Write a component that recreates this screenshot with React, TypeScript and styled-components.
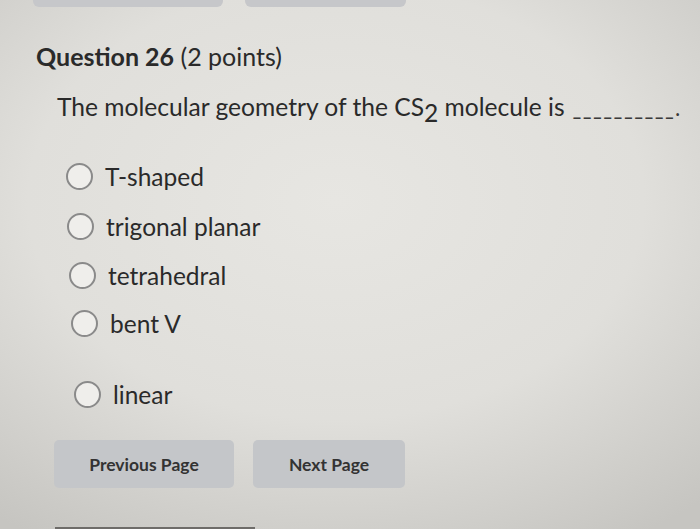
import React from "react";
import styled, { createGlobalStyle } from "styled-components";

const Global = createGlobalStyle`
  html, body { margin: 0; padding: 0; }
  body {
    width: 700px;
    height: 529px;
    overflow: hidden;
    font-family: Lato, "Open Sans", sans-serif;
    background: #d9d8d4;
  }
`;

const Screen = styled.div`
  width: 700px;
  height: 529px;
  overflow: hidden;
  display: flex;
  flex-direction: column;
  color: #2a2a2a;
  background: radial-gradient(ellipse 80% 75% at 48% 38%, #e7e6e2 0%, #e0dfdb 55%, #c6c5c1 100%);
`;

const TopBar = styled.div`
  display: flex;
  gap: 22px;
  padding-left: 33px;
  height: 7px;
`;

const CutButton = styled.div<{ $w: number }>`
  width: ${(p) => p.$w}px;
  height: 7px;
  background: #c6c7ca;
  border-radius: 0 0 6px 6px;
`;

const Heading = styled.h2`
  margin: 34px 0 0 36px;
  font-size: 25px;
  line-height: 30px;
  font-weight: 400;
`;

const Strong = styled.span`
  font-weight: 700;
`;

const Prompt = styled.p`
  margin: 21px 0 0 57px;
  font-size: 24.6px;
  line-height: 30px;
  white-space: nowrap;
`;

const Sub = styled.sub`
  font-size: 24.6px;
  line-height: 0;
  vertical-align: -6px;
`;

const Blank = styled.span`
  margin-left: 8px;
  letter-spacing: 1.9px;
  font-size: 18px;
  font-weight: 700;
  color: #3a3a3a;
`;

const Options = styled.ul`
  list-style: none;
  margin: 38px 0 0 0;
  padding: 0;
  display: flex;
  flex-direction: column;
`;

const Option = styled.li<{ $shift: number; $gap: number }>`
  display: flex;
  align-items: center;
  gap: 12px;
  height: 28px;
  margin-top: ${(p) => p.$gap}px;
  padding-left: ${(p) => 66 + p.$shift}px;
  font-size: 24.5px;
`;

const Radio = styled.span`
  width: 23px;
  height: 23px;
  border-radius: 50%;
  border: 2px solid #8a8a8a;
  background: #efeeeb;
  flex: none;
`;

const ButtonRow = styled.div`
  display: flex;
  gap: 19px;
  margin: 32px 0 0 54px;
`;

const NavButton = styled.button<{ $w: number }>`
  width: ${(p) => p.$w}px;
  height: 48px;
  border: none;
  border-radius: 5px;
  background: #c4c6c9;
  color: #333;
  font-family: Lato, "Open Sans", sans-serif;
  font-weight: 700;
  font-size: 17.5px;
  padding: 0;
`;

const BottomEdge = styled.div`
  margin: auto 0 0 55px;
  width: 200px;
  height: 2px;
  background: #6e6c69;
`;

const options = [
  { label: "T-shaped", shift: 0, gap: 0 },
  { label: "trigonal planar", shift: 1, gap: 22 },
  { label: "tetrahedral", shift: 3, gap: 21 },
  { label: "bent V", shift: 5, gap: 20 },
  { label: "linear", shift: 8, gap: 43 },
];

export default function App() {
  return (
    <>
      <Global />
      <Screen>
        <TopBar>
          <CutButton $w={190} />
          <CutButton $w={161} />
        </TopBar>
        <Heading>
          <Strong>Question 26</Strong> (2 points)
        </Heading>
        <Prompt>
          The molecular geometry of the CS<Sub>2</Sub> molecule is
          <Blank>__________.</Blank>
        </Prompt>
        <Options>
          {options.map((o) => (
            <Option key={o.label} $shift={o.shift} $gap={o.gap}>
              <Radio />
              {o.label}
            </Option>
          ))}
        </Options>
        <ButtonRow>
          <NavButton $w={180}>Previous Page</NavButton>
          <NavButton $w={152}>Next Page</NavButton>
        </ButtonRow>
        <BottomEdge />
      </Screen>
    </>
  );
}
